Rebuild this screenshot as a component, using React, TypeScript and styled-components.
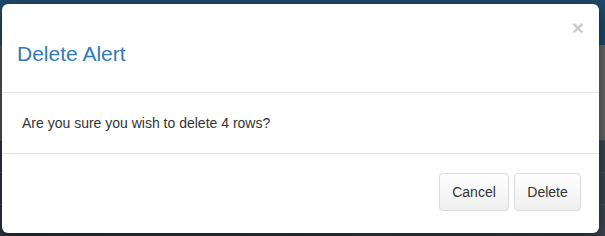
import React from 'react'
import styled, { createGlobalStyle } from 'styled-components'

const GlobalStyle = createGlobalStyle`
  html, body {
    margin: 0;
    padding: 0;
    width: 605px;
    height: 236px;
    overflow: hidden;
    font-family: "Liberation Sans", Arial, Helvetica, sans-serif;
  }
`

const Page = styled.div`
  position: relative;
  width: 605px;
  height: 236px;
  display: flex;
  flex-direction: column;
  background: #565656;
`

const Navbar = styled.div`
  height: 45px;
  background: #1d4a68;
`

const GreyArea = styled.div`
  flex: 1;
  background: linear-gradient(to right, #545454, #666666);
`

const TableArea = styled.div`
  height: 96px;
  background: linear-gradient(to right, #2e343e, #3c4450);
  display: flex;
  flex-direction: column;
`

const TableRow = styled.div`
  flex: 1;
  border-top: 1px solid #46505c;
`

const Modal = styled.div`
  position: absolute;
  left: 2px;
  top: 4px;
  width: 597px;
  background: #fff;
  border-radius: 6px;
  box-shadow: 0 5px 15px rgba(0, 0, 0, 0.5);
  overflow: hidden;
`

const Header = styled.div`
  position: relative;
  padding: 38px 15px 27px;
  border-bottom: 1px solid #e5e5e5;
`

const Title = styled.h4`
  margin: 0;
  font-size: 21px;
  font-weight: normal;
  line-height: 1.1;
  color: #337ab7;
`

const Close = styled.button`
  position: absolute;
  top: 13px;
  right: 15px;
  padding: 0;
  border: 0;
  background: transparent;
  font-family: "Liberation Sans", Arial, sans-serif;
  font-size: 21px;
  font-weight: bold;
  line-height: 1;
  color: #000;
  opacity: 0.2;
  cursor: pointer;
`

const Body = styled.div`
  padding: 20px;
  font-size: 14px;
  line-height: 20px;
  color: #333;
`

const Footer = styled.div`
  display: flex;
  justify-content: flex-end;
  gap: 5px;
  padding: 19px 18px 22px;
  border-top: 1px solid #e5e5e5;
`

const Button = styled.button<{ $width: number }>`
  width: ${p => p.$width}px;
  height: 38px;
  padding: 0;
  font-family: "Liberation Sans", Arial, sans-serif;
  font-size: 14px;
  color: #333;
  background: linear-gradient(to bottom, #ffffff, #efefef);
  border: 1px solid #dcdcdc;
  border-radius: 4px;
  cursor: pointer;
`

const App = () => {
  return (
    <>
      <GlobalStyle />
      <Page>
        <Navbar />
        <GreyArea />
        <TableArea>
          <TableRow />
          <TableRow />
          <TableRow />
        </TableArea>
        <Modal>
          <Header>
            <Title>Delete Alert</Title>
            <Close aria-label='Close'>×</Close>
          </Header>
          <Body>Are you sure you wish to delete 4 rows?</Body>
          <Footer>
            <Button $width={70}>Cancel</Button>
            <Button $width={67}>Delete</Button>
          </Footer>
        </Modal>
      </Page>
    </>
  )
}

export default App
